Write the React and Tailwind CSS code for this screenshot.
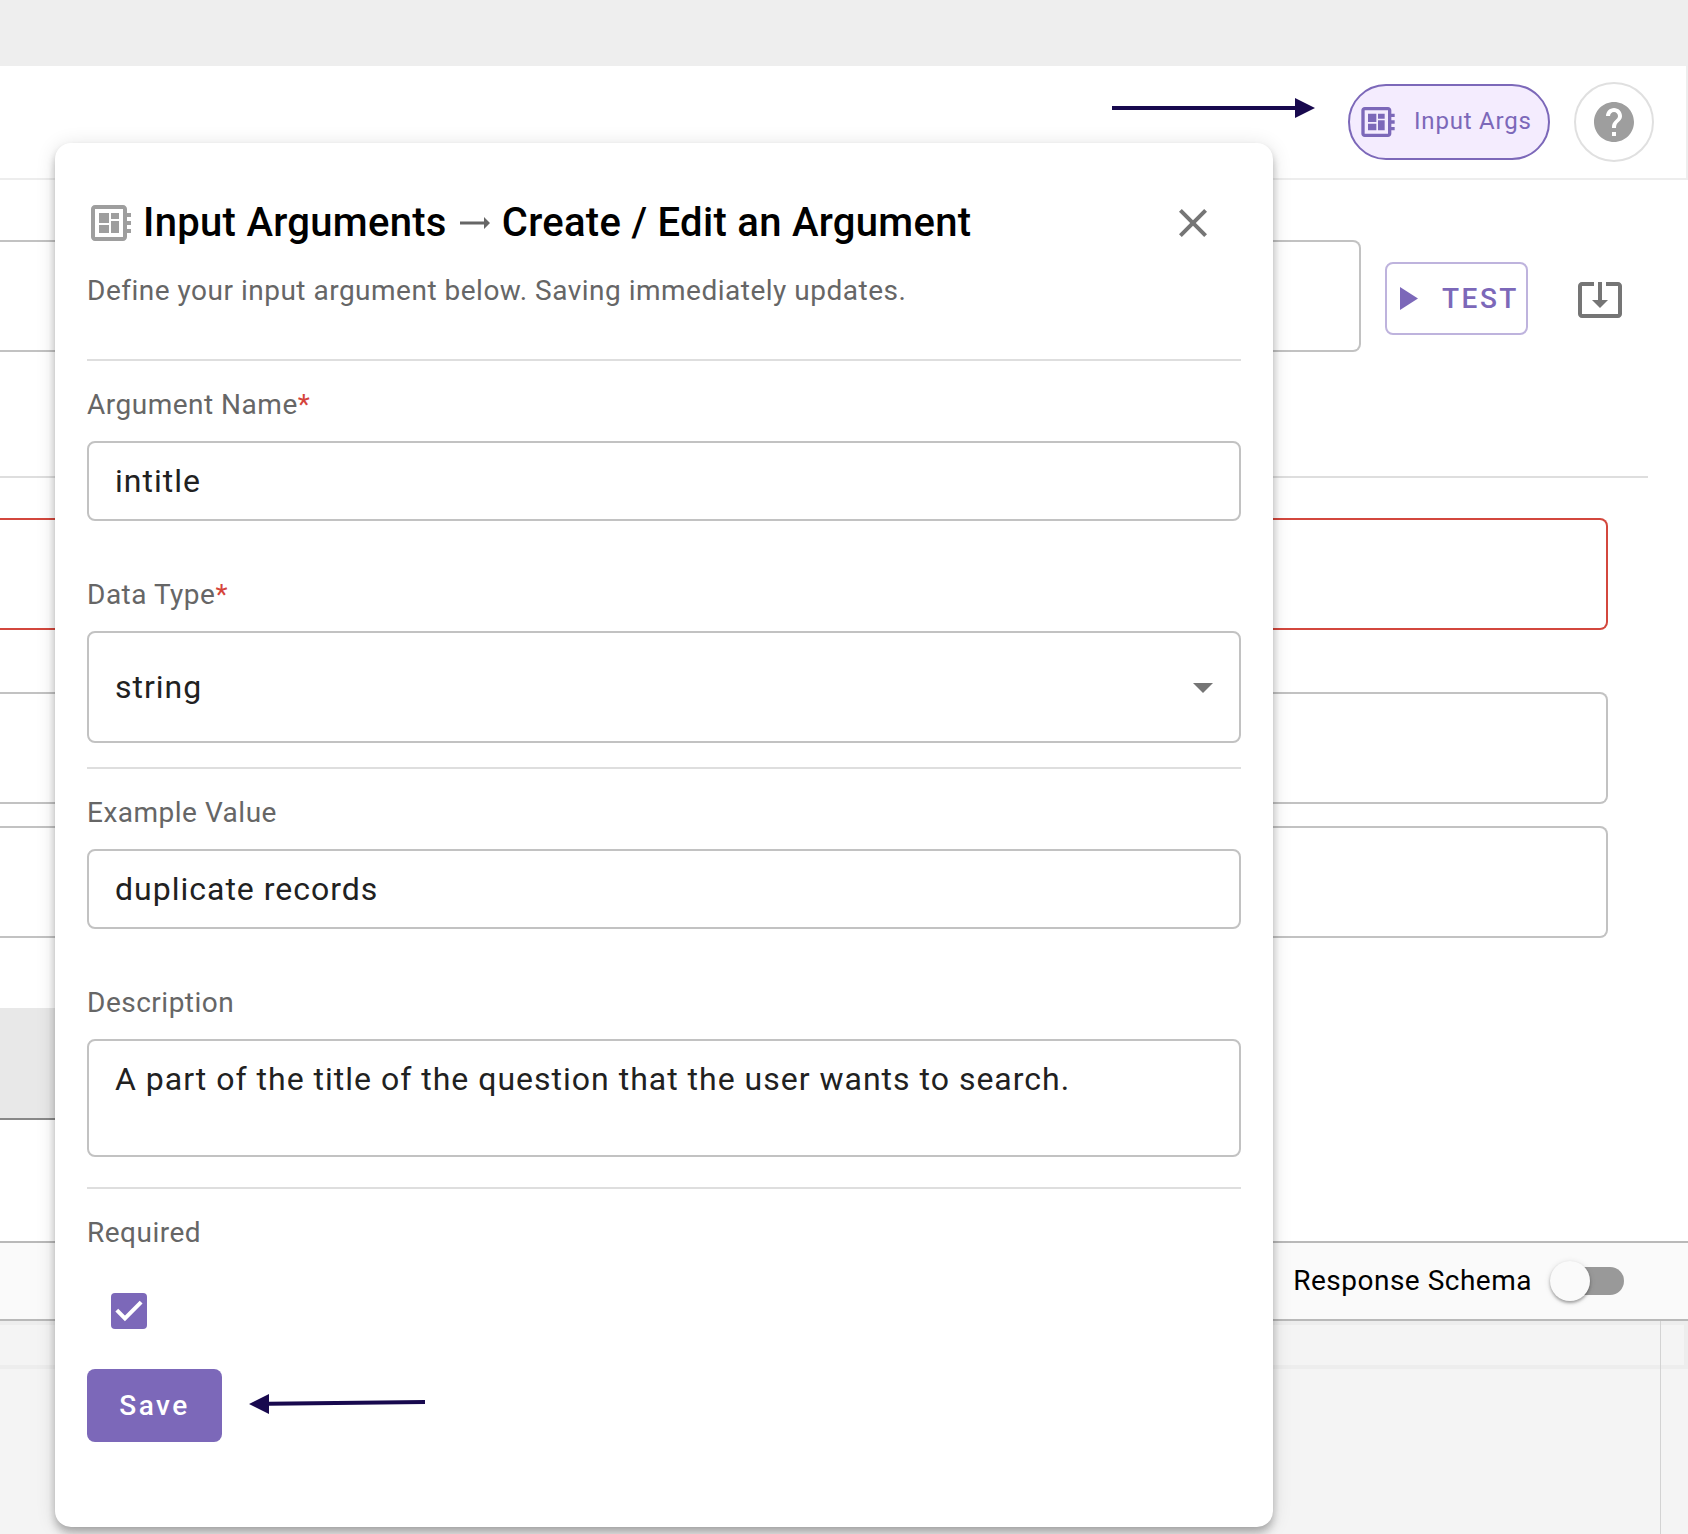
import React from "react";

function BoardIcon({ className }) {
  return (
    <svg viewBox="0 0 24 24" fill="currentColor" className={className}>
      <path d="M22 9V7h-2V5c0-1.1-.9-2-2-2H4c-1.1 0-2 .9-2 2v14c0 1.1.9 2 2 2h14c1.1 0 2-.9 2-2v-2h2v-2h-2v-2h2v-2h-2V9h2zm-4 10H4V5h14v14zM6 13h5v4H6v-4zm6-6h4v3h-4V7zM6 7h5v5H6V7zm6 4h4v6h-4v-6z" />
    </svg>
  );
}

function HelpIcon({ className }) {
  return (
    <svg viewBox="0 0 24 24" fill="currentColor" className={className}>
      <path d="M12 2C6.48 2 2 6.48 2 12s4.48 10 10 10 10-4.48 10-10S17.52 2 12 2zm1 17h-2v-2h2v2zm2.07-7.75l-.9.92C13.45 12.9 13 13.5 13 15h-2v-.5c0-1.1.45-2.1 1.17-2.83l1.24-1.26c.37-.36.59-.86.59-1.41 0-1.1-.9-2-2-2s-2 .9-2 2H8c0-2.21 1.79-4 4-4s4 1.79 4 4c0 .88-.36 1.68-.93 2.25z" />
    </svg>
  );
}

function DownloadIcon({ className }) {
  return (
    <svg viewBox="0 0 24 24" fill="currentColor" className={className}>
      <path d="M12 16.5l4-4h-3v-9h-2v9H8l4 4zm9-13h-6v1.99h6v14.03H3V5.49h6V3.5H3c-1.1 0-2 .9-2 2v14c0 1.1.9 2 2 2h18c1.1 0 2-.9 2-2v-14c0-1.1-.9-2-2-2z" />
    </svg>
  );
}

function CloseIcon({ className }) {
  return (
    <svg viewBox="0 0 24 24" fill="currentColor" className={className}>
      <path d="M19 6.41L17.59 5 12 10.59 6.41 5 5 6.41 10.59 12 5 17.59 6.41 19 12 13.41 17.59 19 19 17.59 13.41 12z" />
    </svg>
  );
}

function Label({ children, required, className = "" }) {
  return (
    <div className={`h-10 text-[28px] leading-10 tracking-[0.5px] text-[#666] ${className}`}>
      {children}
      {required && <span className="text-[#d5443b]">*</span>}
    </div>
  );
}

function Field({ children, className = "h-20 items-center" }) {
  return (
    <div className={`mt-4 flex rounded-lg border-2 border-[#c2c2c2] px-[26px] text-[32px] leading-10 tracking-[1px] text-[#212121] ${className}`}>
      {children}
    </div>
  );
}

function Divider({ className = "" }) {
  return <div className={`h-0.5 bg-[#dedede] ${className}`} />;
}

function ArgumentDialog() {
  return (
    <div className="absolute left-[55px] top-[143px] flex h-[1384px] w-[1218px] flex-col rounded-2xl bg-white px-8 pt-14 shadow-[0_4px_8px_-2px_rgba(0,0,0,0.2),0_8px_10px_0_rgba(0,0,0,0.14),0_2px_20px_0_rgba(0,0,0,0.12)]">
      <div className="flex h-12 items-center">
        <BoardIcon className="size-12 shrink-0 text-[#9e9e9e]" />
        <div className="ml-2 flex items-center whitespace-nowrap text-[40px] font-medium leading-12 tracking-[0.3px] text-black">
          <span>Input Arguments</span>
          <svg viewBox="0 0 30 12" className="ml-[13px] mr-3 h-3 w-[30px] fill-[#666]">
            <path d="M0 4.500h24V0l6 6-6 6V7.500H0z" />
          </svg>
          <span>Create / Edit an Argument</span>
        </div>
        <CloseIcon className="ml-auto mr-6 size-12 text-[#757575]" />
      </div>
      <p className="mt-6 h-10 text-[28px] leading-10 tracking-[0.5px] text-[#666]">
        Define your input argument below. Saving immediately updates.
      </p>
      <Divider className="mt-12" />

      <Label required className="mt-6">Argument Name</Label>
      <Field>intitle</Field>

      <Label required className="mt-[54px]">Data Type</Label>
      <Field className="h-28 items-center justify-between">
        <span>string</span>
        <svg viewBox="0 0 20 10" className="mt-0.5 h-2.5 w-5 fill-[#757575]">
          <path d="M0 0h20L10 10z" />
        </svg>
      </Field>
      <Divider className="mt-6" />

      <Label className="mt-6">Example Value</Label>
      <Field>duplicate records</Field>

      <Label className="mt-[54px]">Description</Label>
      <Field className="h-[118px] items-start pt-[18px]">
        A part of the title of the question that the user wants to search.
      </Field>
      <Divider className="mt-[30px]" />

      <Label className="mt-6">Required</Label>
      <div className="ml-6 mt-10 flex size-9 items-center justify-center rounded bg-[#7c68b9]">
        <svg viewBox="0 0 24 24" className="size-8 fill-none stroke-white stroke-3">
          <path d="M2.850 11.400l6.100 6.100L21.100 5.300" />
        </svg>
      </div>
      <button className="mt-10 h-[73px] w-[135px] rounded-lg bg-[#7c68b9] text-[28px] font-medium tracking-[2.5px] text-white">
        Save
      </button>
    </div>
  );
}

export default function App() {
  return (
    <div className="relative flex h-[1534px] w-[1688px] flex-col overflow-hidden bg-white font-['Roboto',sans-serif]">
      <div className="h-[66px] shrink-0 bg-[#eee]" />
      <header className="flex h-[114px] shrink-0 items-center justify-end border-b-2 border-[#ededed]">
        <button className="flex h-[76px] w-[202px] items-center rounded-full border-2 border-[#7c68b9] bg-[#f4ecfe] pl-2 text-[24px] tracking-[0.8px] text-[#7c68b9]">
          <BoardIcon className="size-10 shrink-0" />
          <span className="ml-4 whitespace-nowrap pb-0.5">Input Args</span>
        </button>
        <div className="ml-6 mr-8 flex size-20 items-center justify-center rounded-full border-2 border-[#e0e0e0]">
          <HelpIcon className="size-12 text-[#9e9e9e]" />
        </div>
        <div className="h-full w-0.5 bg-[#eee]" />
      </header>

      <div className="mt-[60px] flex h-28 shrink-0">
        <div className="h-28 w-[1361px] rounded-r-lg border-2 border-l-0 border-[#c2c2c2]" />
        <button className="ml-6 mt-[22px] flex h-[73px] w-[143px] items-center rounded-lg border-2 border-[#beb3dd] pl-[13px] text-[28px] font-medium tracking-[2.5px] text-[#7c68b9]">
          <svg viewBox="0 0 18 23" className="h-[23px] w-[18px] shrink-0 fill-current">
            <path d="M0 0v23l18-11.500z" />
          </svg>
          <span className="ml-6">TEST</span>
        </button>
        <DownloadIcon className="ml-12 mt-[35px] size-12 text-[#757575]" />
      </div>

      <div className="mt-[124px] h-0.5 w-[1648px] shrink-0 bg-[#dedede]" />
      <div className="mt-10 h-28 w-[1608px] shrink-0 rounded-r-lg border-2 border-l-0 border-[#d3473d]" />
      <div className="mt-[62px] h-28 w-[1608px] shrink-0 rounded-r-lg border-2 border-l-0 border-[#c2c2c2]" />
      <div className="mt-[22px] h-28 w-[1608px] shrink-0 rounded-r-lg border-2 border-l-0 border-[#c2c2c2]" />
      <div className="mt-[70px] h-28 w-[600px] shrink-0 border-b-2 border-[#888] bg-[#e8e8e8]" />

      <div className="mt-[121px] flex h-20 shrink-0 items-center justify-end border-y-2 border-[#b9b9b9] bg-[#fafafa] pr-16">
        <span className="text-[28px] tracking-[0.5px] text-black">Response Schema</span>
        <div className="relative ml-5 h-7 w-[72px] rounded-full bg-[#999]">
          <div className="absolute -left-0.5 -top-1.5 size-10 rounded-full bg-[#fafafa] shadow-[0_2px_3px_rgba(0,0,0,0.3),0_1px_6px_rgba(0,0,0,0.12)]" />
        </div>
      </div>
      <div className="flex flex-1 bg-[#f4f4f4]">
        <div className="flex-1 border-r border-[#d3d3d3]">
          <div className="h-12 border-y-4 border-[#ededed]" />
        </div>
        <div className="h-12 w-[27px] border-y-4 border-r-4 border-[#ededed]" />
      </div>

      <ArgumentDialog />

      <svg viewBox="0 0 204 20" className="absolute left-[1112px] top-[98px] h-5 w-[204px] fill-[#18094e]">
        <path d="M0 8h183V0l20 10-20 10v-8H0z" />
      </svg>
      <svg viewBox="0 0 176 20" className="absolute left-[249px] top-[1394px] h-5 w-[176px] fill-[#18094e]">
        <path d="M0 10L20 0v7.800L176 6v4L20 11.800V20z" />
      </svg>
    </div>
  );
}
